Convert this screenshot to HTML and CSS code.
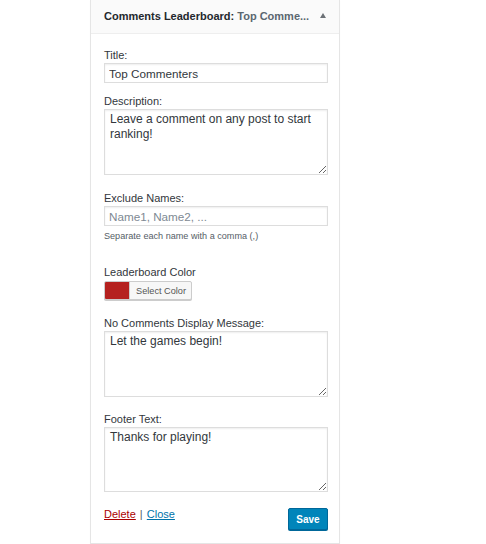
FILE: index.html
```html
<!DOCTYPE html>
<html>
<head>
<meta charset="utf-8">
<link rel="stylesheet" href="styles.css">
</head>
<body>
<div class="widget">
  <div class="widget-top">
    <div class="widget-title"><strong>Comments Leaderboard:</strong> <span class="in-title">Top Comme...</span></div>
    <span class="toggle"></span>
  </div>
  <div class="widget-inside">
    <div class="field f-first">
      <label>Title:</label>
      <input class="text" type="text" value="Top Commenters">
    </div>
    <div class="field f-desc">
      <label>Description:</label>
      <textarea class="area">Leave a comment on any post to start ranking!</textarea>
    </div>
    <div class="field f-exclude">
      <label>Exclude Names:</label>
      <input class="text" type="text" placeholder="Name1, Name2, ...">
      <div class="help">Separate each name with a comma (,)</div>
    </div>
    <div class="field f-color">
      <label>Leaderboard Color</label>
      <button class="color-btn" type="button"><span class="swatch"></span><span class="color-label">Select Color</span></button>
    </div>
    <div class="field f-nocomments">
      <label>No Comments Display Message:</label>
      <textarea class="area">Let the games begin!</textarea>
    </div>
    <div class="field f-footer">
      <label>Footer Text:</label>
      <textarea class="area short">Thanks for playing!</textarea>
    </div>
    <div class="actions">
      <div class="links"><a class="delete" href="#">Delete</a> <span class="sep">|</span> <a class="close" href="#">Close</a></div>
      <button class="save" type="button">Save</button>
    </div>
  </div>
</div>
</body>
</html>
```
FILE: styles.css
```css
html, body {
  margin: 0;
  padding: 0;
  background: #fff;
}
body {
  font-family: "Liberation Sans", Arial, Helvetica, sans-serif;
  color: #23282d;
}
.widget {
  margin-left: 90px;
  width: 248px;
  border: 1px solid #e5e5e5;
  border-top: none;
  box-shadow: 0 1px 1px rgba(0,0,0,0.04);
  background: #fff;
}
.widget-top {
  height: 33px;
  background: #fafafa;
  border-bottom: 1px solid #eeeeee;
  display: flex;
  align-items: center;
  justify-content: space-between;
  padding: 0 12px 0 13px;
}
.widget-title {
  font-size: 11px;
  line-height: 14px;
  white-space: nowrap;
  padding-bottom: 1px;
}
.widget-title strong {
  font-weight: bold;
  color: #23282d;
}
.in-title {
  color: #5b6770;
  font-weight: bold;
}
.toggle {
  width: 0;
  height: 0;
  border-left: 3px solid transparent;
  border-right: 3px solid transparent;
  border-bottom: 5px solid #6c7176;
  margin-right: 1px;
  margin-bottom: 2px;
}
.widget-inside {
  padding: 14px 11px 13px 13px;
}
.field label {
  display: block;
  font-size: 11px;
  line-height: 14px;
  color: #32373c;
  margin-bottom: 1px;
}
.f-desc { margin-top: 11px; }
.f-exclude { margin-top: 16px; }
.f-color { margin-top: 23px; }
.f-nocomments { margin-top: 16px; }
.f-footer { margin-top: 15px; }
.text {
  display: block;
  box-sizing: border-box;
  width: 224px;
  height: 20px;
  margin: 0;
  padding: 0 4px;
  border: 1px solid #dddddd;
  box-shadow: inset 0 1px 2px rgba(0,0,0,0.07);
  font-family: inherit;
  font-size: 11.7px;
  color: #32373c;
  background: #fff;
  outline: none;
  border-radius: 0;
}
.text::placeholder {
  color: #7e8993;
}
.area {
  display: block;
  box-sizing: border-box;
  width: 224px;
  height: 66px;
  margin: 0;
  padding: 2px 5px;
  border: 1px solid #dddddd;
  box-shadow: inset 0 1px 2px rgba(0,0,0,0.07);
  font-family: inherit;
  font-size: 12px;
  line-height: 15px;
  color: #32373c;
  background: #fff;
  outline: none;
  border-radius: 0;
  resize: vertical;
}
.area.short {
  height: 65px;
}
.help {
  margin-top: 4px;
  font-size: 9.1px;
  line-height: 12px;
  color: #555d66;
}
.color-btn {
  display: flex;
  align-items: stretch;
  margin-top: 2px;
  padding: 0;
  height: 19px;
  border: 1px solid #cccccc;
  border-radius: 2px;
  background: #f7f7f7;
  box-shadow: 0 1px 0 #cccccc;
  cursor: pointer;
  overflow: hidden;
  font-family: inherit;
}
.swatch {
  width: 24px;
  background: #b5211f;
  border-right: 1px solid #cccccc;
}
.color-label {
  display: flex;
  align-items: center;
  padding: 0 5px 0 6px;
  font-size: 9.2px;
  color: #555555;
}
.actions {
  margin-top: 15px;
  display: flex;
  justify-content: space-between;
  align-items: flex-start;
  padding-right: 0;
}
.links {
  font-size: 11px;
  line-height: 14px;
  color: #555d66;
}
.links a {
  text-decoration: underline;
}
.delete {
  color: #a00;
}
.close {
  color: #0073aa;
}
.sep {
  color: #555d66;
  padding: 0 1px;
}
.save {
  margin-top: 1px;
  height: 22px;
  width: 40px;
  padding: 0;
  border: 1px solid #006799;
  border-radius: 2px;
  background: #0085ba;
  box-shadow: 0 1px 0 #006799;
  color: #fff;
  font-family: inherit;
  font-weight: bold;
  font-size: 10px;
  cursor: pointer;
}
```
